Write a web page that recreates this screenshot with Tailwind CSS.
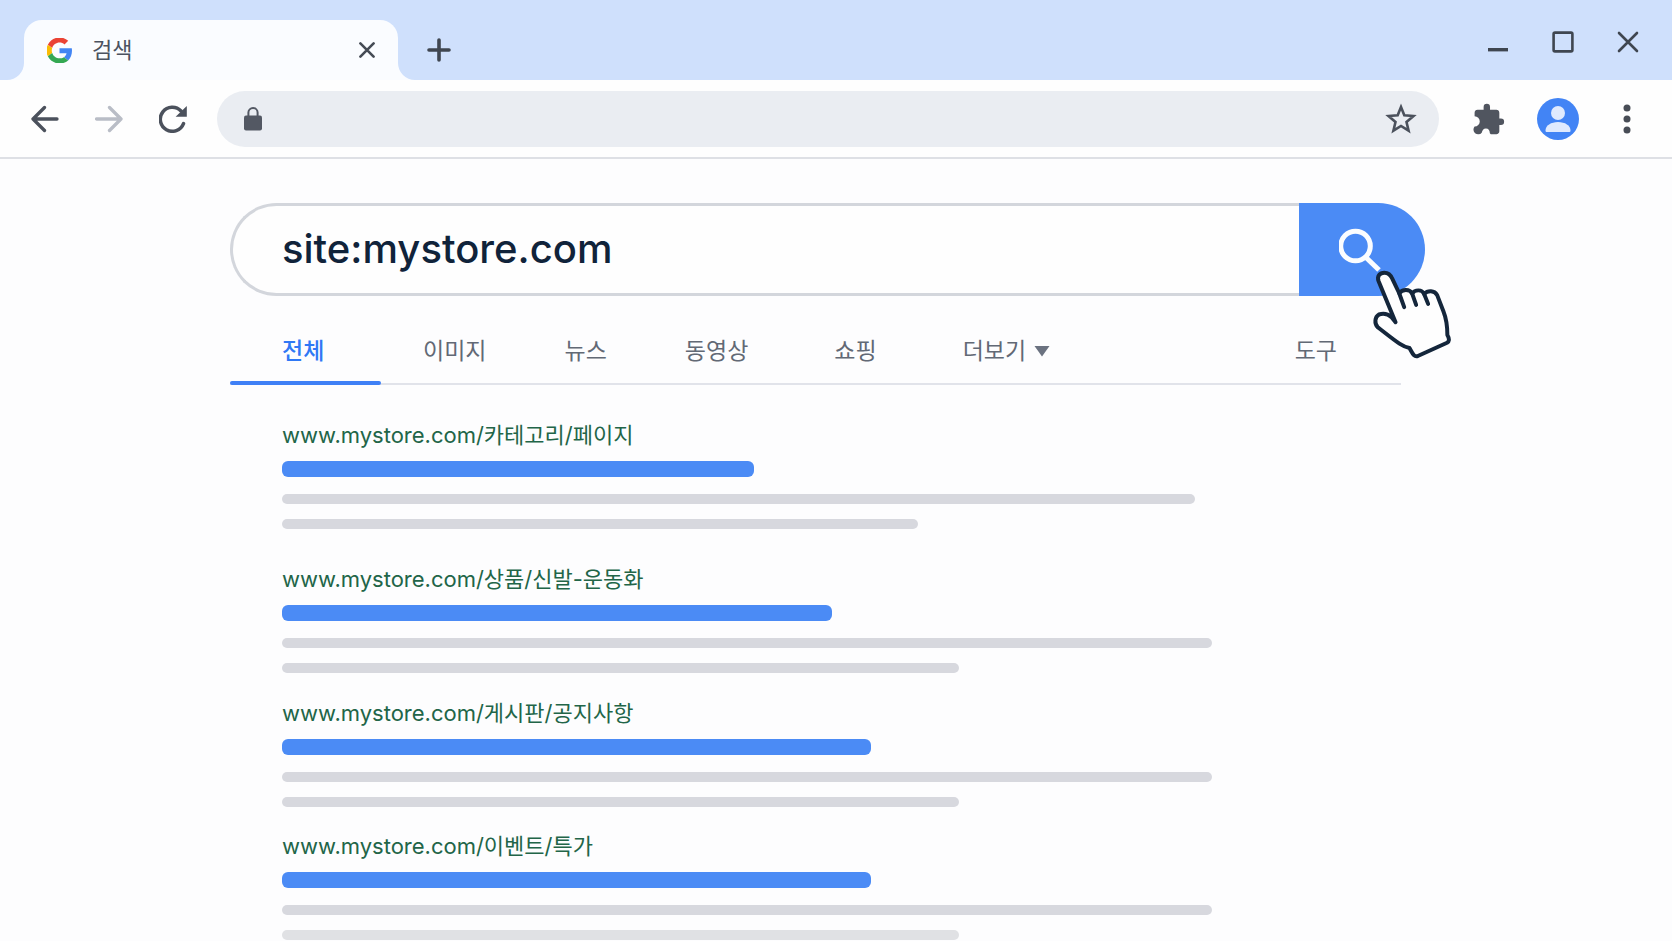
<!DOCTYPE html>
<html lang="ko">
  <head>
    <meta charset="utf-8"/>
    <meta name="viewport" content="width=device-width, initial-scale=1"/>
    <title>검색</title>
    <script src="https://cdn.jsdelivr.net/npm/@tailwindcss/browser@4"></script>
  </head>

  <body class="min-h-screen overflow-x-hidden bg-[#fdfdfe] font-['Inter','Noto_Sans_CJK_KR',sans-serif] text-[#4b5260]">
    <!-- tab strip -->
    <header class="flex h-20 items-end bg-[#cfe0fc] pl-6">
      <div class="relative flex h-[60px] w-[374px] items-center rounded-t-[18px] bg-[#fafcff] pr-[11px] pl-[23px]">
        <svg class="absolute bottom-0 -left-[17px] size-[17px]" viewBox="0 0 17 17" fill="#fafcff" aria-hidden="true"><path d="M17 0v17H0A17 17 0 0 0 17 0z"/></svg>
        <svg class="absolute -right-[17px] bottom-0 size-[17px]" viewBox="0 0 17 17" fill="#fafcff" aria-hidden="true"><path d="M0 0v17h17A17 17 0 0 1 0 0z"/></svg>
        <svg class="size-[25px]" viewBox="1 1 46 46" aria-hidden="true">
          <path fill="#EA4335" d="M24 9.5c3.54 0 6.71 1.22 9.21 3.6l6.85-6.85C35.9 2.38 30.47 0 24 0 14.62 0 6.51 5.38 2.56 13.22l7.98 6.19C12.43 13.72 17.74 9.5 24 9.5z"/>
          <path fill="#4285F4" d="M46.98 24.55c0-1.57-.15-3.09-.38-4.55H24v9.02h12.94c-.58 2.96-2.26 5.48-4.78 7.18l7.73 6c4.51-4.18 7.09-10.36 7.09-17.65z"/>
          <path fill="#FBBC05" d="M10.53 28.59c-.48-1.45-.76-2.99-.76-4.59s.27-3.14.76-4.59l-7.98-6.19C.92 16.46 0 20.12 0 24c0 3.88.92 7.54 2.56 10.78l7.97-6.19z"/>
          <path fill="#34A853" d="M24 48c6.48 0 11.93-2.13 15.89-5.81l-7.73-6c-2.15 1.45-4.92 2.3-8.16 2.3-6.26 0-11.57-4.22-13.47-9.91l-7.98 6.19C6.51 42.62 14.62 48 24 48z"/>
        </svg>
        <span class="ml-5 text-[22px] leading-8">검색</span>
        <button type="button" class="ml-auto flex size-10 items-center justify-center" aria-label="탭 닫기">
          <svg class="size-4" viewBox="0 0 16 16" fill="none" stroke="#454b55" stroke-width="2.6" stroke-linecap="round"><path d="M1.4 1.4l13.2 13.2M14.6 1.4L1.4 14.6"/></svg>
        </button>
      </div>
      <button type="button" class="mb-[10px] ml-[21px] flex size-10 items-center justify-center" aria-label="새 탭">
        <svg class="size-6" viewBox="0 0 24 24" fill="none" stroke="#3f4650" stroke-width="3.6" stroke-linecap="round"><path d="M12 2v20M2 12h20"/></svg>
      </button>
      <div class="mr-6 mb-[18px] ml-auto flex gap-[25px]">
        <button type="button" class="flex size-10 items-center justify-center" aria-label="최소화">
          <svg class="size-6" viewBox="0 0 24 24" fill="none" stroke="#3f4650" stroke-width="3.4"><path d="M2 19.7h20"/></svg>
        </button>
        <button type="button" class="flex size-10 items-center justify-center" aria-label="최대화">
          <svg class="size-6" viewBox="0 0 24 24" fill="none" stroke="#3f4650" stroke-width="2.6"><rect x="2.6" y="2.6" width="18.8" height="18.8" rx="1.4"/></svg>
        </button>
        <button type="button" class="flex size-10 items-center justify-center" aria-label="닫기">
          <svg class="size-6" viewBox="0 0 24 24" fill="none" stroke="#3f4650" stroke-width="2.6" stroke-linecap="round"><path d="M3 3l18 18M21 3L3 21"/></svg>
        </button>
      </div>
    </header>

    <!-- toolbar -->
    <div class="flex h-[79px] items-center gap-6 border-b-2 border-[#dee0e5] bg-[#fefefe] px-[25px]">
      <button type="button" class="flex size-10 items-center justify-center" aria-label="뒤로">
        <svg class="size-7" viewBox="0 0 28 28" fill="none" stroke="#4b515c" stroke-width="3.3" stroke-linecap="round" stroke-linejoin="round"><path d="M26 14H2M13.5 2.5L2 14l11.5 11.5"/></svg>
      </button>
      <button type="button" class="flex size-10 items-center justify-center" aria-label="앞으로">
        <svg class="size-7" viewBox="0 0 28 28" fill="none" stroke="#b9bdc6" stroke-width="3.3" stroke-linecap="round" stroke-linejoin="round"><path d="M1.5 14H26M14.5 2.5L26 14 14.5 25.5"/></svg>
      </button>
      <button type="button" class="flex size-10 items-center justify-center" aria-label="새로고침">
        <svg class="size-7" viewBox="0 0 28 28" fill="none" stroke="#4b515c" stroke-width="3.5" stroke-linecap="round"><path d="M24.5 18.6A12 12 0 1 1 22 6"/><path d="M27.8 1v10.8H16.6z" fill="#4b515c" stroke="none"/></svg>
      </button>
      <form class="flex h-14 flex-1 items-center rounded-full bg-[#eaedf2] pr-[18px] pl-6">
        <svg class="h-6 w-6" viewBox="0 0 24 24" aria-hidden="true"><rect x="3" y="8.5" width="18" height="15" rx="2" fill="#535863"/><path d="M7.4 10V5.6a4.6 4.6 0 0 1 9.2 0V10" fill="none" stroke="#535863" stroke-width="2"/></svg>
        <input type="text" aria-label="주소" class="mx-4 h-10 min-w-0 flex-1 bg-transparent text-[22px] outline-none"/>
        <button type="button" class="flex size-10 items-center justify-center" aria-label="북마크">
          <svg class="size-8" viewBox="0 0 32 32" fill="none" stroke="#4b515c" stroke-width="2.6" stroke-linejoin="miter"><path d="M16 4l3.3 8.3 9.2.7-7 6 2.1 8.7-7.6-4.7-7.6 4.7 2.1-8.7-7-6 9.2-.7z"/></svg>
        </button>
      </form>
      <div class="ml-[6px] flex items-center gap-7">
        <button type="button" class="flex size-10 items-center justify-center" aria-label="확장 프로그램">
          <svg class="size-8" viewBox="1.5 .5 22 22" fill="#50555f"><path d="M20.7 11.2H19.6V7.2c0-1.1-.9-2-2-2H13.2V3.2a2.2 2.2 0 0 0-4.4 0V5.2H4.6c-1.1 0-2 .9-2 2v2.4a3.3 3.3 0 0 1 0 7.1 2.9 2.9 0 1 0 4.9 4.2c.3-1.5 1.2-2.9 2.9-2.9s2.6 1.2 2.6 2.8c0 .8.6 1.2 1.3 1.2h3.3c1.1 0 2-.9 2-2v-4.4h1.1a2.2 2.2 0 0 0 0-4.4z"/></svg>
        </button>
        <button type="button" class="size-[42px]" aria-label="프로필">
          <svg class="size-[42px]" viewBox="0 0 42 42"><circle cx="21" cy="21" r="21" fill="#4284f5"/><circle cx="21" cy="15" r="7" fill="#dfeafe"/><path d="M8.5 32.5c0-5 5.5-8.5 12.5-8.5s12.5 3.5 12.5 8.5c0 1-.5 1.5-1.5 1.5H10c-1 0-1.5-.5-1.5-1.5z" fill="#dfeafe"/></svg>
        </button>
        <button type="button" class="flex size-10 items-center justify-center" aria-label="메뉴">
          <svg class="h-8 w-8" viewBox="0 0 32 32" fill="#484d56"><circle cx="16" cy="5" r="3.5"/><circle cx="16" cy="16" r="3.5"/><circle cx="16" cy="27" r="3.5"/></svg>
        </button>
      </div>
    </div>

    <main class="pt-11 pr-[247px] pl-[230px]">
      <form class="relative flex h-[93px]" role="search">
        <input type="text" aria-label="검색어" value="site:mystore.com" class="min-w-0 flex-1 rounded-l-full border-[3px] border-r-0 border-[#d3d6dc] bg-[#fefefe] pb-[2px] pl-[49px] text-[40px] font-medium text-[#10233a] outline-none"/>
        <button type="button" class="w-[126px] rounded-r-full bg-[#4b8bf5] pl-10" aria-label="검색">
          <svg class="size-11" viewBox="0 0 44 44" fill="none" stroke="#fbfdff" stroke-width="5"><circle cx="16.5" cy="18" r="14.8"/><path d="M26.5 29l13.5 13"/></svg>
        </button>
        <!-- pointer over the search button -->
        <svg class="pointer-events-none absolute top-[65px] -right-7 h-[93px] w-[82px]" viewBox="335 265 245 280" fill="#fefefe" stroke="#14263b" stroke-width="12" stroke-linecap="round" stroke-linejoin="round" aria-hidden="true">
          <path d="M408 428L357 305C351 289 361 279 374 279C388 279 394 287 398 297L419 341C428 329 450 327 458 342C466 330 487 328 494 343C505 331 525 332 533 346L552 395C562 420 564 440 564 467C571 479 570 486 563 490L475 530C464 534 460 524 450 506C428 502 412 488 354 443C344 432 345 413 358 405C372 401 387 405 396 413z"/>
          <path d="M419 341L434 383M458 342L470 376M494 343L506 373" fill="none"/>
        </svg>
      </form>

      <nav class="mr-6 flex h-[89px] items-center border-b-2 border-[#e1e3ea] pt-[22px] text-[23px] leading-8 text-[#626975]">
        <a href="#" class="relative flex h-full w-[151px] items-center pl-[52px] font-medium text-[#2f78f5]">전체<span class="absolute -bottom-[2px] left-0 h-1 w-full rounded-full bg-[#3f80f6]"></span></a>
        <a href="#" class="ml-[42px]">이미지</a>
        <a href="#" class="ml-[78px]">뉴스</a>
        <a href="#" class="ml-[78px]">동영상</a>
        <a href="#" class="ml-[86px]">쇼핑</a>
        <button type="button" class="ml-[86px] flex items-center gap-2">더보기
          <svg class="h-3 w-4" viewBox="0 0 16 12" fill="#6b7280" aria-hidden="true"><path d="M.5 1h15L8 11.5z"/></svg>
        </button>
        <a href="#" class="mr-16 ml-auto">도구</a>
      </nav>

      <section class="pt-[34px] pl-[52px] text-[22px] leading-8 text-[#226548]">
        <article class="mb-[34px]">
          <a href="#">www.mystore.com/카테고리/페이지</a>
          <div class="mt-[10px] h-4 w-[472px] rounded-[6px] bg-[#4b8bf5]"></div>
          <div class="mt-[17px] h-[10px] w-[913px] rounded-full bg-[#d7d8de]"></div>
          <div class="mt-[15px] h-[10px] w-[636px] rounded-full bg-[#d7d8de]"></div>
        </article>
        <article class="mb-6">
          <a href="#">www.mystore.com/상품/신발-운동화</a>
          <div class="mt-[10px] h-4 w-[550px] rounded-[6px] bg-[#4b8bf5]"></div>
          <div class="mt-[17px] h-[10px] w-[930px] rounded-full bg-[#d7d8de]"></div>
          <div class="mt-[15px] h-[10px] w-[677px] rounded-full bg-[#d7d8de]"></div>
        </article>
        <article class="mb-[23px]">
          <a href="#">www.mystore.com/게시판/공지사항</a>
          <div class="mt-[10px] h-4 w-[589px] rounded-[6px] bg-[#4b8bf5]"></div>
          <div class="mt-[17px] h-[10px] w-[930px] rounded-full bg-[#d7d8de]"></div>
          <div class="mt-[15px] h-[10px] w-[677px] rounded-full bg-[#d7d8de]"></div>
        </article>
        <article>
          <a href="#">www.mystore.com/이벤트/특가</a>
          <div class="mt-[10px] h-4 w-[589px] rounded-[6px] bg-[#4b8bf5]"></div>
          <div class="mt-[17px] h-[10px] w-[930px] rounded-full bg-[#d7d8de]"></div>
          <div class="mt-[15px] h-[10px] w-[677px] rounded-full bg-[#e0e1e4]"></div>
        </article>
      </section>
    </main>
  </body>
</html>
